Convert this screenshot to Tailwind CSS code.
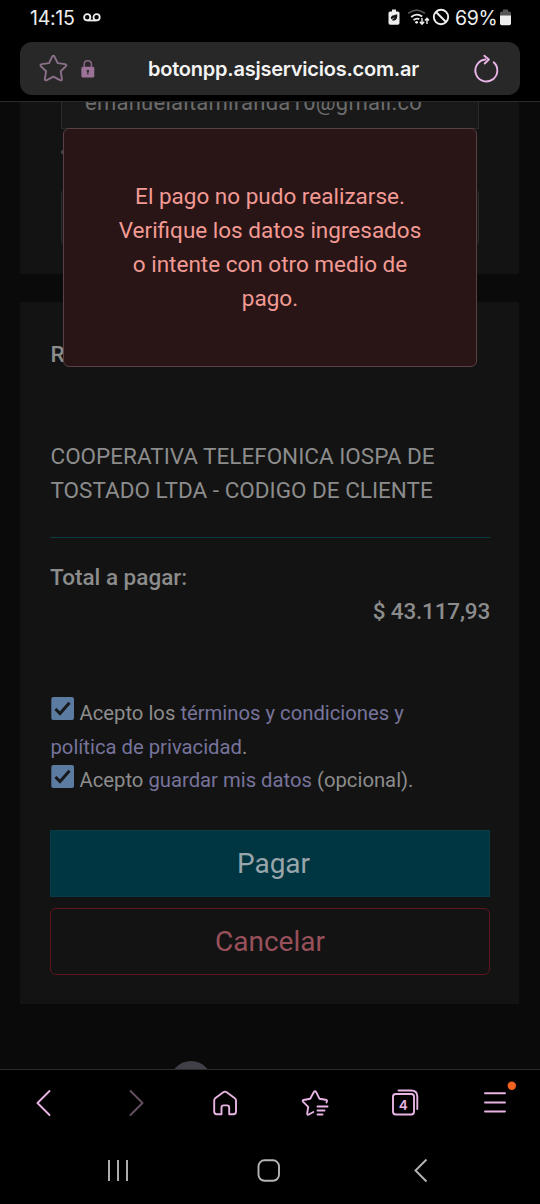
<!DOCTYPE html>
<html lang="es">
<head>
<meta charset="utf-8">
<title>Botón de pago</title>
<script src="https://cdn.jsdelivr.net/npm/@tailwindcss/browser@4"></script>
</head>
<body class="bg-black">
<div class="w-[540px] h-[1204px] flex flex-col overflow-hidden bg-black font-[Roboto,sans-serif]">
  <!-- status bar -->
  <header class="h-[42px] shrink-0 flex items-start pl-[30px] pr-[29px] pt-[4px] text-[#eeeeee]">
    <span class="font-[Inter,sans-serif] text-[19.500px] leading-[28px] tracking-[-0.3px] whitespace-nowrap w-[46px]">14:15</span>
    <svg class="ml-[7px] mt-[9px] shrink-0" width="18" height="9" viewBox="0 0 18 9" fill="none" stroke="#eee" stroke-width="1.8"><circle cx="4.2" cy="4.3" r="3.1"/><circle cx="13.6" cy="4.3" r="3.1"/><path d="M4.5 7.5H13.5"/></svg>
    <div class="flex ml-auto">
      <svg class="-ml-px mr-px mt-[5px]" width="12" height="17" viewBox="0 0 12 17"><path d="M4 .6h4v1.8h1.800q1.700 0 1.700 1.600v10q0 1.700-1.700 1.700H2.200q-1.700 0-1.700-1.700V4q0-1.600 1.700-1.600H4z" fill="#eee"/><path d="M2.800 8.500Q3.500 6.200 6 6.200L9.200 5.300Q9.600 10.500 7 11.300Q4.800 12 3.800 10.900L7.500 8.200L3.300 10.200Z" fill="#111"/></svg>
      <svg class="ml-[6px] mr-px mt-[5px]" width="24" height="18" viewBox="0 0 24 18" fill="none" stroke-width="1.8"><path d="M1.200 4.400Q9.500-2.200 18 4.400" stroke="#555"/><path d="M4.200 8Q9.500 3.500 15.200 7.500M6.600 11.200Q9.500 8.600 12.300 10.200" stroke="#eee"/><circle cx="9.600" cy="13.300" r="1.400" fill="#eee"/><path d="M15 9v5.500M12.800 12.700L15 15.200L17.200 12.700M20 15V10M18 11.500L20 9.200L22 11.500" stroke="#eee" stroke-width="1.400"/></svg>
      <svg class="mt-[4px]" width="18" height="18" viewBox="0 0 18 18" fill="none" stroke="#eee" stroke-width="1.900"><circle cx="9" cy="9" r="7.200"/><path d="M4 4L14 14"/></svg>
      <span class="ml-[5px] w-[43px] font-[Inter,sans-serif] text-[19.500px] leading-[28px] tracking-[-0.4px] whitespace-nowrap">69%</span>
      <svg class="ml-[2px] mt-[5px]" width="11" height="17" viewBox="0 0 11 17"><path d="M3 .6h5v2h1.300Q11 2.600 11 4.200V7H0V4.200Q0 2.600 1.700 2.600H3z" fill="#555"/><path d="M0 6.500h11v8q0 1.700-1.700 1.700H1.700Q0 16.200 0 14.500z" fill="#eee"/></svg>
    </div>
  </header>

  <!-- address bar -->
  <div class="h-[59px] shrink-0 px-[20px]">
    <div class="h-[53px] rounded-[12px] bg-[#282828] flex items-center">
      <svg class="ml-[19px]" width="29" height="29" viewBox="0 0 29 29" fill="none" stroke="#8a7088" stroke-width="1.900" stroke-linejoin="round"><path d="M13.200 2.600Q14.500.8 15.500 2.600L18.700 9.100L25.900 10.100Q28.300 10.600 26.700 12.400L21.700 17.300L22.900 24.700Q23 27 21 26.200L14.400 22.700L7.800 26.200Q5.700 27 5.900 24.700L7.100 17.300L2 12.400Q.6 10.600 2.900 10.100L10 9.100Z"/></svg>
      <svg class="ml-[13px]" width="14" height="20" viewBox="0 0 14 20"><path d="M3.200 9V5.200Q3.200 1.800 6.800 1.800T10.400 5.200V9" fill="none" stroke="#8a6588" stroke-width="1.500"/><rect x=".4" y="7.800" width="12.900" height="10.800" rx="1.500" fill="#9c7298"/><path d="M5.700 11h2.300v1.800h-.5v2.600H6.300v-2.600h-.6z" fill="#282828"/></svg>
      <span class="ml-[53px] w-[271px] font-[Inter,sans-serif] font-semibold text-[20px] leading-[28px] tracking-[-0.230px] text-[#f4f4f4] whitespace-nowrap">botonpp.asjservicios.com.ar</span>
      <svg class="ml-auto mr-[20px]" width="28" height="30" viewBox="0 0 28 30" fill="none" stroke="#eab5e6" stroke-width="1.900" stroke-linecap="round" stroke-linejoin="round"><path d="M13.500 5.500A11 11 0 1 0 21.700 8.300M12.300 1.800L16.900 5.500L12.700 9.500"/></svg>
    </div>
  </div>

  <!-- web page -->
  <main class="h-[968px] shrink-0 relative overflow-hidden bg-[#0a0a0a] border-t border-[#2a2a2a] px-5">
    <section class="h-[172px] w-[499px] bg-[#131313] px-[41px] overflow-hidden">
      <div class="h-[27px] w-[418px] border-x border-b border-[#2b2b2b] bg-[#191919] pl-[23px] overflow-hidden">
        <div class="-mt-[16px] text-[22px] leading-[34px] text-[#6c6c6c] whitespace-nowrap tracking-[0.260px]">emanuelaltamiranda10@gmail.co</div>
      </div>
      <div class="mt-[21px] h-[4px] w-[3px] rounded-full bg-[#4a4447]"></div>
      <div class="mt-[36px] h-[55px] w-[418px] border border-[#2b2b2b] rounded-[4px] bg-[#191919]"></div>
    </section>
    <section class="mt-[28px] h-[702px] w-[499px] bg-[#131313] px-[30px] pt-[36px] text-[22.500px] leading-[33.750px] text-[#8c8c8c]">
      <h2 class="pl-[0.500px] font-medium">Resumen</h2>
      <p class="mt-[68.500px] pl-[0.500px] whitespace-nowrap">COOPERATIVA TELEFONICA IOSPA DE<br>TOSTADO LTDA - CODIGO DE CLIENTE</p>
      <div class="mt-[29.500px] h-px w-[440px] bg-[#0c3d47]"></div>
      <p class="mt-[23px] font-medium">Total a pagar:</p>
      <p class="w-[440px] text-right font-medium tracking-[-0.180px]">$ 43.117,93</p>
      <div class="mt-[68px] pl-[0.500px] text-[20.250px] leading-[33.750px] whitespace-nowrap">
        <div class="flex"><svg class="mt-[0.500px] mr-[6px]" width="23" height="23" viewBox="0 0 23 23"><rect width="22.700" height="23" rx="2" x=".3" fill="#5b7ba0"/><path d="M4.500 12L9 16.500L18.500 5.700" stroke="#17191c" stroke-width="3" fill="none"/></svg><span>Acepto los <span class="text-[#77739b]">términos y condiciones y</span></span></div>
        <div><span class="text-[#77739b]">política de privacidad</span>.</div>
        <div class="flex"><svg class="mt-[0.500px] mr-[6px]" width="23" height="23" viewBox="0 0 23 23"><rect width="22.700" height="23" rx="2" x=".3" fill="#5b7ba0"/><path d="M4.500 12L9 16.500L18.500 5.700" stroke="#17191c" stroke-width="3" fill="none"/></svg><span>Acepto <span class="text-[#77739b]">guardar mis datos</span> (opcional).</span></div>
      </div>
      <button class="mt-[32px] h-[67px] w-[440px] block bg-[#003542] border border-[#063c46] text-[28px] text-[#98a5aa] pl-[7px] pt-px">Pagar</button>
      <button class="mt-[11px] h-[67px] w-[440px] block rounded-[6px] border border-[#60151d] text-[28px] text-[#98505b]">Cancelar</button>
    </section>
    <div class="absolute left-[170px] top-[959px] w-[42px] h-[42px] rounded-full bg-[#414049]"></div>
    <div class="absolute left-[63px] top-[26px] w-[414px] h-[239px] rounded-[6px] border border-[#584044] bg-[#291516] pt-[51.300px] text-center text-[22.500px] leading-[33.750px] text-[#f29a94]">El pago no pudo realizarse.<br>Verifique los datos ingresados<br>o intente con otro medio de<br>pago.</div>
  </main>

  <!-- browser toolbar -->
  <nav class="h-[66px] shrink-0 border-t border-[#2c2c2c]">
    <svg width="540" height="65" viewBox="0 1070 540 65" fill="none" stroke="#e8b4e4" stroke-width="1.900" stroke-linecap="round" stroke-linejoin="round">
      <path d="M49.500 1091L37.500 1103L49.500 1115"/>
      <path d="M130.500 1091L142.500 1103L130.500 1115" stroke="#655062"/>
      <path d="M214.200 1100.500Q214.200 1099 215.500 1098L223.300 1092.200Q225 1091 226.700 1092.200L234.500 1098Q236 1099 236 1100.500V1111.500Q236 1114.200 233.400 1114.200H229.200V1107.500Q229.200 1105.400 227 1105.400H223.700Q221.500 1105.400 221.500 1107.500V1114.200H216.800Q214.200 1114.200 214.200 1111.500Z"/>
      <path d="M326.500 1102.500L327 1101Q327.300 1100 325.500 1099.700L319.400 1098.700L316.200 1092.200Q315 1090.200 313.700 1092.200L310.200 1098.700L303.500 1100Q302 1100.600 303.200 1101.900L308.200 1106.900L307.200 1113.600Q307.200 1115.300 308.800 1114.500L313.300 1112"/>
      <path d="M317.500 1106.500H327.500M317.500 1110.500H324.500M317.500 1114.500H322.500"/>
      <rect x="393" y="1094" width="21" height="20.500" rx="2.700"/>
      <path d="M398.500 1090.500H411Q417.300 1090.500 417.300 1096.500V1109"/>
      <path d="M485 1093.300H505M485 1102.500H505M485 1111.500H505"/>
      <circle cx="511.800" cy="1085.700" r="4.200" fill="#f26322" stroke="none"/>
      <text x="403.200" y="1110" text-anchor="middle" fill="#e8b4e4" stroke="none" class="font-[Inter,sans-serif] font-semibold text-[13.500px]">4</text>
    </svg>
  </nav>

  <!-- system navigation -->
  <footer class="h-[69px] shrink-0">
    <svg width="540" height="69" viewBox="0 1135 540 69" fill="none" stroke="#b5b5b5" stroke-width="1.900">
      <path d="M109 1160V1181M118 1160V1181M127 1160V1181"/>
      <rect x="258.500" y="1160.300" width="20.500" height="20.500" rx="6"/>
      <path d="M426.500 1159.500L415.500 1170.500L426.500 1181.500"/>
    </svg>
  </footer>
</div>
</body>
</html>
